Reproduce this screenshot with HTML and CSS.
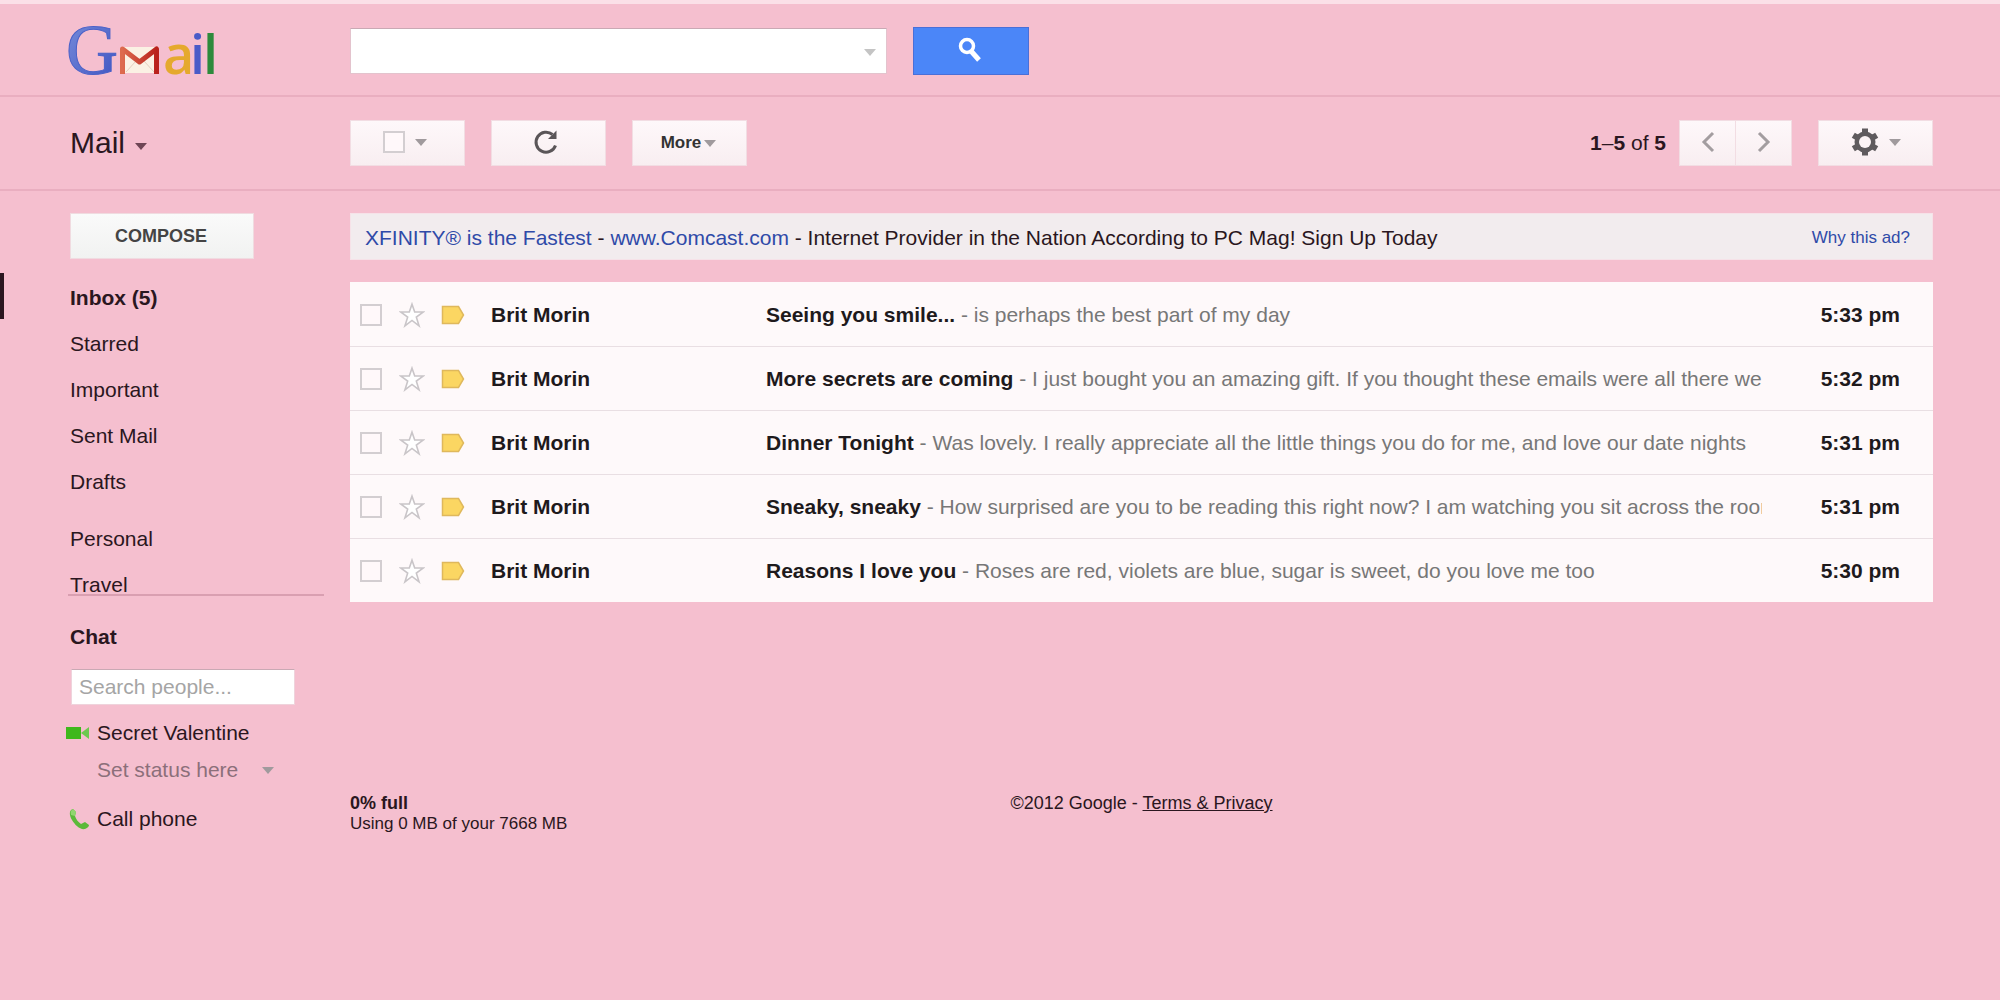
FILE: index.html
```html
<!DOCTYPE html>
<html lang="en">
<head>
<meta charset="utf-8">
<title>Gmail - Inbox (5)</title>
<link rel="stylesheet" href="styles.css">
</head>
<body>
<svg class="defs" width="0" height="0" aria-hidden="true">
  <symbol id="star" viewBox="0 0 24 24"><path d="M12 2 14.500 9.200 22.500 9.200 16 14 18.500 22 12 17 5.500 22 8 14 1.500 9.200 9.500 9.200Z" fill="#fff" stroke="#c9c5c8" stroke-width="1.500"/></symbol>
  <symbol id="marker" viewBox="0 0 24 20"><path d="M1.500 1.500H17.500L22.500 10 17.500 18.500H1.500Z" fill="#fbd662" stroke="#dfb85c" stroke-width="1.500"/></symbol>
</svg>

<header class="topbar">
  <a class="logo" href="#" aria-label="Gmail">
    <svg width="160" height="90" viewBox="-8 -12 160 90">
      <defs>
        <linearGradient id="blue" x1="0" y1="0" x2="1" y2="1"><stop offset="0" stop-color="#7b90dc"/><stop offset="1" stop-color="#3a50c0"/></linearGradient>
        <linearGradient id="red" x1="0" y1="0" x2="1" y2="0"><stop offset="0" stop-color="#dd6a4e"/><stop offset="1" stop-color="#b9211c"/></linearGradient>
      </defs>
      <text class="logo-serif" x="-4" y="57" fill="url(#blue)" stroke="#4a61c8">G</text>
      <rect x="52" y="30" width="36" height="26" rx="1" fill="#fbf1e4"/>
      <path d="M56 55 66 44M84 55 74 44" stroke="#e4cfbf" stroke-width="1" fill="none"/>
      <path d="M52.500 57V32L69.500 45 86.500 32V57" fill="none" stroke="url(#red)" stroke-width="5" stroke-linejoin="round"/>
      <text class="logo-sans" x="93" y="57" fill="#e5a92d">a</text>
      <text class="logo-sans" x="120" y="57" fill="#4a5bc8">i</text>
      <text class="logo-sans" x="133" y="57" fill="#2d8a3c">l</text>
    </svg>
  </a>
  <form class="search">
    <div class="search-box">
      <input type="text" aria-label="Search mail">
      <button type="button" class="plain" aria-label="Search options"><span class="caret pale"></span></button>
    </div>
    <button type="button" class="search-btn" aria-label="Search">
      <svg width="24" height="26" viewBox="0 0 24 26"><circle cx="9" cy="9" r="6.500" fill="none" stroke="#fff" stroke-width="3.500"/><path d="M13 14 21 23" stroke="#fff" stroke-width="5"/></svg>
    </button>
  </form>
</header>

<div class="toolbar">
  <button class="mail-menu plain">Mail <span class="caret dark"></span></button>
  <div class="tools">
    <div class="btn select-all"><input class="tick" type="checkbox" aria-label="Select all"><span class="caret"></span></div>
    <button class="btn refresh" aria-label="Refresh">
      <svg width="26" height="28" viewBox="0 0 26 28"><path d="M22.500 17.500A10 10 0 1 1 19.500 6.500" fill="none" stroke="#5a5558" stroke-width="3"/><path d="M23.500 2.500V11H15Z" fill="#5a5558"/></svg>
    </button>
    <button class="btn more">More<span class="caret"></span></button>
  </div>
  <div class="paging">
    <span class="count"><b>1</b>–<b>5</b> of <b>5</b></span>
    <div class="pager">
      <button class="btn" aria-label="Newer"><svg width="16" height="22" viewBox="0 0 16 22"><path d="M13 2 4 11 13 20" fill="none" stroke="#a39da0" stroke-width="3"/></svg></button>
      <button class="btn" aria-label="Older"><svg width="16" height="22" viewBox="0 0 16 22"><path d="M3 2 12 11 3 20" fill="none" stroke="#a39da0" stroke-width="3"/></svg></button>
    </div>
    <button class="btn" aria-label="Settings">
      <svg width="28" height="28" viewBox="-14 -14 28 28"><g fill="#5f5b5e"><rect x="-3" y="-13.500" width="6" height="27"/><rect x="-3" y="-13.500" width="6" height="27" transform="rotate(60)"/><rect x="-3" y="-13.500" width="6" height="27" transform="rotate(120)"/><circle r="10.500"/></g><circle r="6" fill="#fcf4f6"/></svg>
      <span class="caret"></span>
    </button>
  </div>
</div>

<div class="columns">
  <nav class="sidebar">
    <button class="compose">COMPOSE</button>
    <ul class="folders">
      <li class="current"><a href="#">Inbox (5)</a></li>
      <li><a href="#">Starred</a></li>
      <li><a href="#">Important</a></li>
      <li><a href="#">Sent Mail</a></li>
      <li><a href="#">Drafts</a></li>
    </ul>
    <ul class="folders labels">
      <li><a href="#">Personal</a></li>
      <li><a href="#">Travel</a></li>
    </ul>
    <section class="chat">
      <h2>Chat</h2>
      <input type="text" placeholder="Search people..." aria-label="Search people">
      <div class="chat-row">
        <svg width="24" height="14" viewBox="0 0 24 14"><rect y="1" width="15" height="12" fill="#3fb81c"/><path d="M15 7 23 1V13Z" fill="#6cc94f"/></svg>
        Secret Valentine
      </div>
      <div class="chat-row status"><button class="plain">Set status here <span class="caret"></span></button></div>
      <div class="chat-row call">
        <svg width="24" height="24" viewBox="0 0 24 24"><path d="M7 2C3 3 3 8 6 13S14 23 19 22C22 21 23 19 23 18L19 15 15 17C12 15 10 12 9 9L10 5Z" fill="#5cb93a"/><path d="M7 2 10 5 9 9 5 8C4 5 5 3 7 2Z" fill="#92d56f"/></svg>
        <a href="#">Call phone</a>
      </div>
    </section>
  </nav>

  <main>
    <div class="ad">
      <p><a href="#">XFINITY® is the Fastest</a> - <a href="#">www.Comcast.com</a> - Internet Provider in the Nation According to PC Mag! Sign Up Today</p>
      <a class="why" href="#">Why this ad?</a>
    </div>
    <table class="mails">
      <colgroup><col class="c-tick"><col class="c-star"><col class="c-mark"><col class="c-from"><col><col class="c-time"></colgroup>
      <tbody>
        <tr><td><input class="tick" type="checkbox" aria-label="Select Seeing you smile"></td><td><svg width="26" height="26"><use href="#star"/></svg></td><td><svg width="24" height="20"><use href="#marker"/></svg></td><td class="from">Brit Morin</td><td class="text"><b>Seeing you smile...</b> - is perhaps the best part of my day</td><td class="time">5:33 pm</td></tr>
        <tr><td><input class="tick" type="checkbox" aria-label="Select More secrets are coming"></td><td><svg width="26" height="26"><use href="#star"/></svg></td><td><svg width="24" height="20"><use href="#marker"/></svg></td><td class="from">Brit Morin</td><td class="text"><b>More secrets are coming</b> - I just bought you an amazing gift. If you thought these emails were all there we</td><td class="time">5:32 pm</td></tr>
        <tr><td><input class="tick" type="checkbox" aria-label="Select Dinner Tonight"></td><td><svg width="26" height="26"><use href="#star"/></svg></td><td><svg width="24" height="20"><use href="#marker"/></svg></td><td class="from">Brit Morin</td><td class="text"><b>Dinner Tonight</b> - Was lovely. I really appreciate all the little things you do for me, and love our date nights</td><td class="time">5:31 pm</td></tr>
        <tr><td><input class="tick" type="checkbox" aria-label="Select Sneaky, sneaky"></td><td><svg width="26" height="26"><use href="#star"/></svg></td><td><svg width="24" height="20"><use href="#marker"/></svg></td><td class="from">Brit Morin</td><td class="text"><b>Sneaky, sneaky</b> - How surprised are you to be reading this right now? I am watching you sit across the room</td><td class="time">5:31 pm</td></tr>
        <tr><td><input class="tick" type="checkbox" aria-label="Select Reasons I love you"></td><td><svg width="26" height="26"><use href="#star"/></svg></td><td><svg width="24" height="20"><use href="#marker"/></svg></td><td class="from">Brit Morin</td><td class="text"><b>Reasons I love you</b> - Roses are red, violets are blue, sugar is sweet, do you love me too</td><td class="time">5:30 pm</td></tr>
      </tbody>
    </table>
    <footer>
      <p><b>0% full</b><br>Using 0 MB of your 7668 MB</p>
      <p class="legal">©2012 Google - <a href="#">Terms &amp; Privacy</a></p>
      <p></p>
    </footer>
  </main>
</div>
</body>
</html>
```

FILE: styles.css
```css
* { box-sizing: border-box; }

body {
  margin: 0;
  min-height: 100vh;
  background: #f5bfcf;
  border-top: 4px solid #fbe0e8;
  color: #2a1620;
  font: 21px/24px "Liberation Sans", Arial, sans-serif;
}

button, input { font: inherit; color: inherit; margin: 0; }
button { cursor: pointer; }
a { color: inherit; text-decoration: none; }
p, h2, ul { margin: 0; padding: 0; }
ul { list-style: none; }
svg { display: block; flex: none; }
.defs { position: absolute; }

.plain { border: 0; padding: 0; background: none; }

.caret {
  display: inline-block;
  flex: none;
  border: 6px solid transparent;
  border-top: 7px solid #a09a9d;
  border-bottom: 0;
}
.caret.dark { border-top-color: #6e4555; }
.caret.pale { border-top-color: #c4c4c4; }

.tick {
  appearance: none;
  display: block;
  flex: none;
  width: 22px;
  height: 22px;
  border: 2px solid #d3ced1;
  background: #fff8fa;
}

/* Header */
.topbar, .toolbar {
  display: grid;
  grid-template-columns: 280px 1fr auto;
  align-items: center;
  padding: 0 67px 0 70px;
  border-bottom: 2px solid #e9aec0;
}
.topbar { height: 93px; }
.toolbar { height: 94px; }

.logo { display: block; margin-left: -8px; }
.logo-serif { font: 72px "Liberation Serif", serif; stroke-width: 1px; }
.logo-sans { font: 600 54px "Open Sans", sans-serif; }

.search { display: flex; gap: 26px; align-items: center; padding-top: 2px; }
.search-box {
  display: flex;
  width: 537px;
  height: 46px;
  background: #fff;
  border: 1px solid #e3c3cd;
  border-top-color: #c9a9b4;
}
.search-box input { flex: 1; min-width: 0; border: 0; padding: 0 10px; background: none; }
.search-box button { width: 32px; padding-bottom: 4px; }
.search-btn {
  display: flex;
  justify-content: center;
  align-items: center;
  width: 116px;
  height: 48px;
  padding: 0 2px 2px 0;
  border: 1px solid #4a6fd8;
  background: #4b86f8;
}

/* Toolbar */
.mail-menu { justify-self: start; display: flex; align-items: center; gap: 10px; font-size: 30px; line-height: 36px; }
.mail-menu .caret { margin-top: 6px; }
.tools, .paging, .pager { display: flex; align-items: center; }
.tools { gap: 26px; }
.btn {
  display: flex;
  justify-content: center;
  align-items: center;
  gap: 10px;
  width: 115px;
  height: 46px;
  padding: 0 0 2px;
  border: 1px solid #f2dde3;
  background: linear-gradient(#fef8fa, #f8eef1);
}
.select-all, .refresh { padding-right: 6px; }
.more { gap: 3px; padding: 0 2px 0 0; font-size: 17px; font-weight: bold; color: #333; }
.count { margin-right: 13px; }
.pager { margin-right: 26px; }
.pager .btn { width: 57px; }
.pager .btn + .btn { margin-left: -1px; }

/* Columns */
.columns { display: grid; grid-template-columns: 350px 1fr; padding: 22px 67px 0 0; }

.sidebar { padding-right: 26px; }
.compose {
  display: block;
  width: 184px;
  height: 46px;
  margin: 0 0 14px 70px;
  padding: 0 2px 0 0;
  border: 1px solid #f0dbe0;
  background: linear-gradient(#fafafa, #f1f2f1);
  color: #444;
  font-size: 18px;
  font-weight: bold;
}
.folders a { display: block; padding: 4px 0 0 70px; line-height: 42px; }
.folders .current { border-left: 4px solid #2a1620; font-weight: bold; }
.folders .current a { padding-left: 66px; }
.labels { margin-top: 11px; }

.chat { margin: -12px 0 0 68px; border-top: 2px solid #d99fb1; }
.chat h2 { padding: 29px 0 20px 2px; font-size: 21px; line-height: 24px; }
.chat input {
  display: block;
  width: 224px;
  height: 36px;
  margin: 0 0 16px 3px;
  padding: 0 7px;
  border: 1px solid #efd3dc;
  border-top-color: #c9a9b4;
  background: #fff;
}
.chat input::placeholder { color: #a5a5a5; opacity: 1; }
.chat-row { display: flex; align-items: center; gap: 7px; margin-left: -2px; }
.status { padding: 13px 0 25px 31px; color: #8c6f7a; }
.status button { display: flex; align-items: center; gap: 24px; }

/* Mail list */
.ad {
  display: flex;
  justify-content: space-between;
  align-items: center;
  height: 47px;
  padding: 2px 22px 0 14px;
  border: 1px solid #f6e2e8;
  background: #f2ecee;
  white-space: nowrap;
}
.ad a { color: #2f4aa8; }
.ad .why { font-size: 17px; }

.mails {
  width: 100%;
  margin-top: 22px;
  border-collapse: collapse;
  table-layout: fixed;
  background: #fef9fa;
}
.c-tick { width: 49px; }
.c-star { width: 42px; }
.c-mark { width: 50px; }
.c-from { width: 275px; }
.c-time { width: 171px; }
.mails td { height: 64px; padding: 2px 0 0; border-bottom: 1px solid #e9dfe3; white-space: nowrap; overflow: hidden; }
.mails tr:last-child td { border-bottom: 0; }
.mails .tick { margin-left: 10px; }
.mails .from, .mails .text b, .mails .time { color: #1e1a1c; font-weight: bold; }
.mails .text { color: #777; }
.mails .time { padding-right: 33px; text-align: right; }

footer {
  display: grid;
  grid-template-columns: 1fr auto 1fr;
  margin-top: 191px;
  font-size: 17px;
  line-height: 20px;
}
footer b, .legal { font-size: 18px; }
footer a { text-decoration: underline; }
```
